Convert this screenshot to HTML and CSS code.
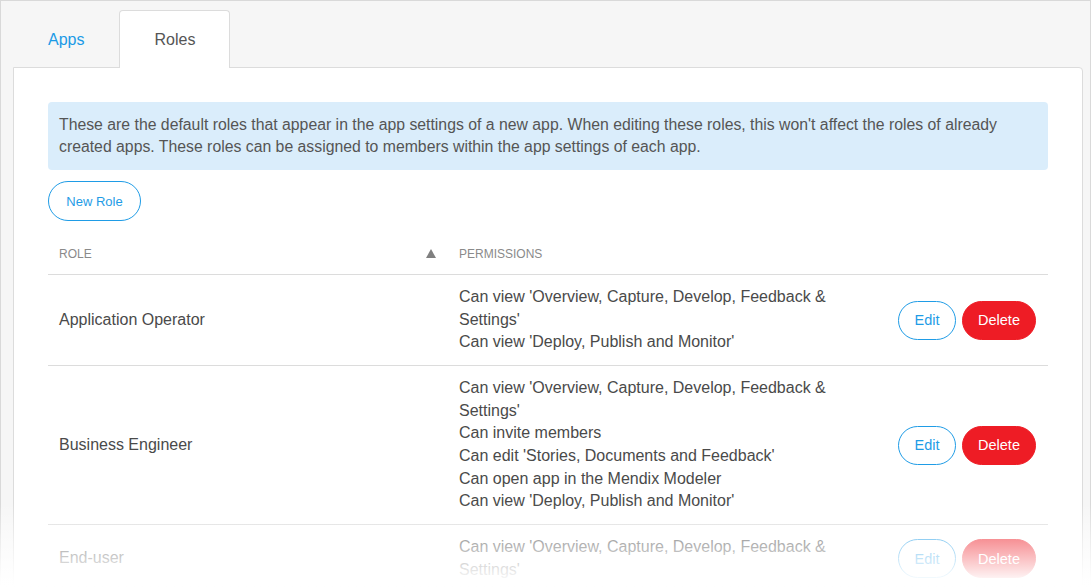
FILE: index.html
```html
<!DOCTYPE html>
<html>
<head>
<meta charset="utf-8">
<link rel="stylesheet" href="styles.css">
</head>
<body>
<div class="frame">
  <nav class="tabs">
    <a class="tab">Apps</a>
    <a class="tab active">Roles</a>
  </nav>
  <section class="panel">
    <div class="info">These are the default roles that appear in the app settings of a new app. When editing these roles, this won't affect the roles of already created apps. These roles can be assigned to members within the app settings of each app.</div>
    <button class="btn btn-outline new-role">New Role</button>
    <table class="roles">
      <thead>
        <tr>
          <th class="col-role"><div class="th-inner"><span>Role</span><svg class="sort" width="10" height="9" viewBox="0 0 10 9"><polygon points="5,0 10,9 0,9" fill="#808080"/></svg></div></th>
          <th class="col-perm">Permissions</th>
          <th class="col-act"></th>
        </tr>
      </thead>
      <tbody>
        <tr>
          <td class="col-role">Application Operator</td>
          <td class="col-perm">Can view 'Overview, Capture, Develop, Feedback &amp; Settings'<br>Can view 'Deploy, Publish and Monitor'</td>
          <td class="col-act"><div class="actions"><button class="btn btn-outline">Edit</button><button class="btn btn-danger">Delete</button></div></td>
        </tr>
        <tr>
          <td class="col-role">Business Engineer</td>
          <td class="col-perm">Can view 'Overview, Capture, Develop, Feedback &amp; Settings'<br>Can invite members<br>Can edit 'Stories, Documents and Feedback'<br>Can open app in the Mendix Modeler<br>Can view 'Deploy, Publish and Monitor'</td>
          <td class="col-act"><div class="actions"><button class="btn btn-outline">Edit</button><button class="btn btn-danger">Delete</button></div></td>
        </tr>
        <tr>
          <td class="col-role">End-user</td>
          <td class="col-perm">Can view 'Overview, Capture, Develop, Feedback &amp; Settings'</td>
          <td class="col-act"><div class="actions"><button class="btn btn-outline">Edit</button><button class="btn btn-danger">Delete</button></div></td>
        </tr>
      </tbody>
    </table>
  </section>
</div>
<div class="fade"></div>
</body>
</html>
```

FILE: styles.css
```css
* { box-sizing: border-box; }
html, body {
  margin: 0;
  padding: 0;
  height: 100%;
  overflow: hidden;
}
body {
  position: relative;
  font-family: "Liberation Sans", Arial, sans-serif;
  color: #555;
  background: #fff;
}
.frame {
  height: 587px;
  border: 1px solid #d9d9d9;
  background: #f6f6f6;
  padding: 9px 7px 0 12px;
  overflow: hidden;
}
.tabs {
  display: flex;
  height: 57px;
}
.tab {
  display: block;
  padding: 0 34px;
  line-height: 57px;
  font-size: 16px;
  color: #1a9ae6;
  border: 1px solid transparent;
  border-bottom: none;
  border-radius: 4px 4px 0 0;
}
.tab.active {
  color: #555;
  background: #fff;
  border-color: #dcdcdc;
  position: relative;
  z-index: 1;
  height: 58px;
}
.panel {
  background: #fff;
  border: 1px solid #dcdcdc;
  border-radius: 0 4px 0 0;
  padding: 34px 34px 40px;
  height: 560px;
}
.info {
  background: #daedfb;
  border-radius: 4px;
  padding: 12px 11px;
  font-size: 15.8px;
  line-height: 22px;
  color: #555;
}
.btn {
  font-family: "Liberation Sans", Arial, sans-serif;
  height: 40px;
  border-radius: 20px;
  font-size: 14px;
  padding: 0 16px;
  cursor: pointer;
  background: #fff;
}
.btn-outline {
  border: 1px solid #1f9ce6;
  color: #1f9ce6;
}
.btn-danger {
  border: 1px solid #ee1c25;
  background: #ee1c25;
  color: #fff;
}
.new-role {
  display: block;
  margin-top: 11px;
  font-size: 13px;
  width: 93px;
  padding: 0;
}
.roles {
  width: 100%;
  border-collapse: collapse;
  margin-top: 10px;
}
.roles th {
  text-align: left;
  font-weight: normal;
  text-transform: uppercase;
  font-size: 12px;
  color: #8a8a8a;
  padding: 13px 11px 9px;
  line-height: 21px;
  border-bottom: 1px solid #dcdcdc;
}
.roles th.col-role { padding-right: 12px; }
.th-inner {
  display: flex;
  justify-content: space-between;
  align-items: center;
}
.sort { display: block; margin-top: -2px; }
.roles td {
  font-size: 16px;
  line-height: 22.67px;
  padding: 11px 11px;
  border-bottom: 1px solid #dcdcdc;
  vertical-align: middle;
  color: #4a4a4a;
}
.col-role { width: 400px; }
.col-perm { width: 425px; }
.col-act { width: 175px; }
.roles td.col-act { padding-right: 12px; }
.actions {
  display: flex;
  justify-content: flex-end;
  gap: 6px;
}
.actions .btn {
  height: 39px;
  font-size: 14.5px;
}
.actions .btn-outline { width: 58px; padding: 0; }
.actions .btn-danger { width: 74px; padding: 0; }
.fade {
  position: absolute;
  left: 0;
  right: 0;
  top: 503px;
  height: 84px;
  background: linear-gradient(rgba(255,255,255,0) 0%, rgba(255,255,255,0.5) 42%, rgba(255,255,255,0.97) 92%, #fff 100%);
  pointer-events: none;
}
```
